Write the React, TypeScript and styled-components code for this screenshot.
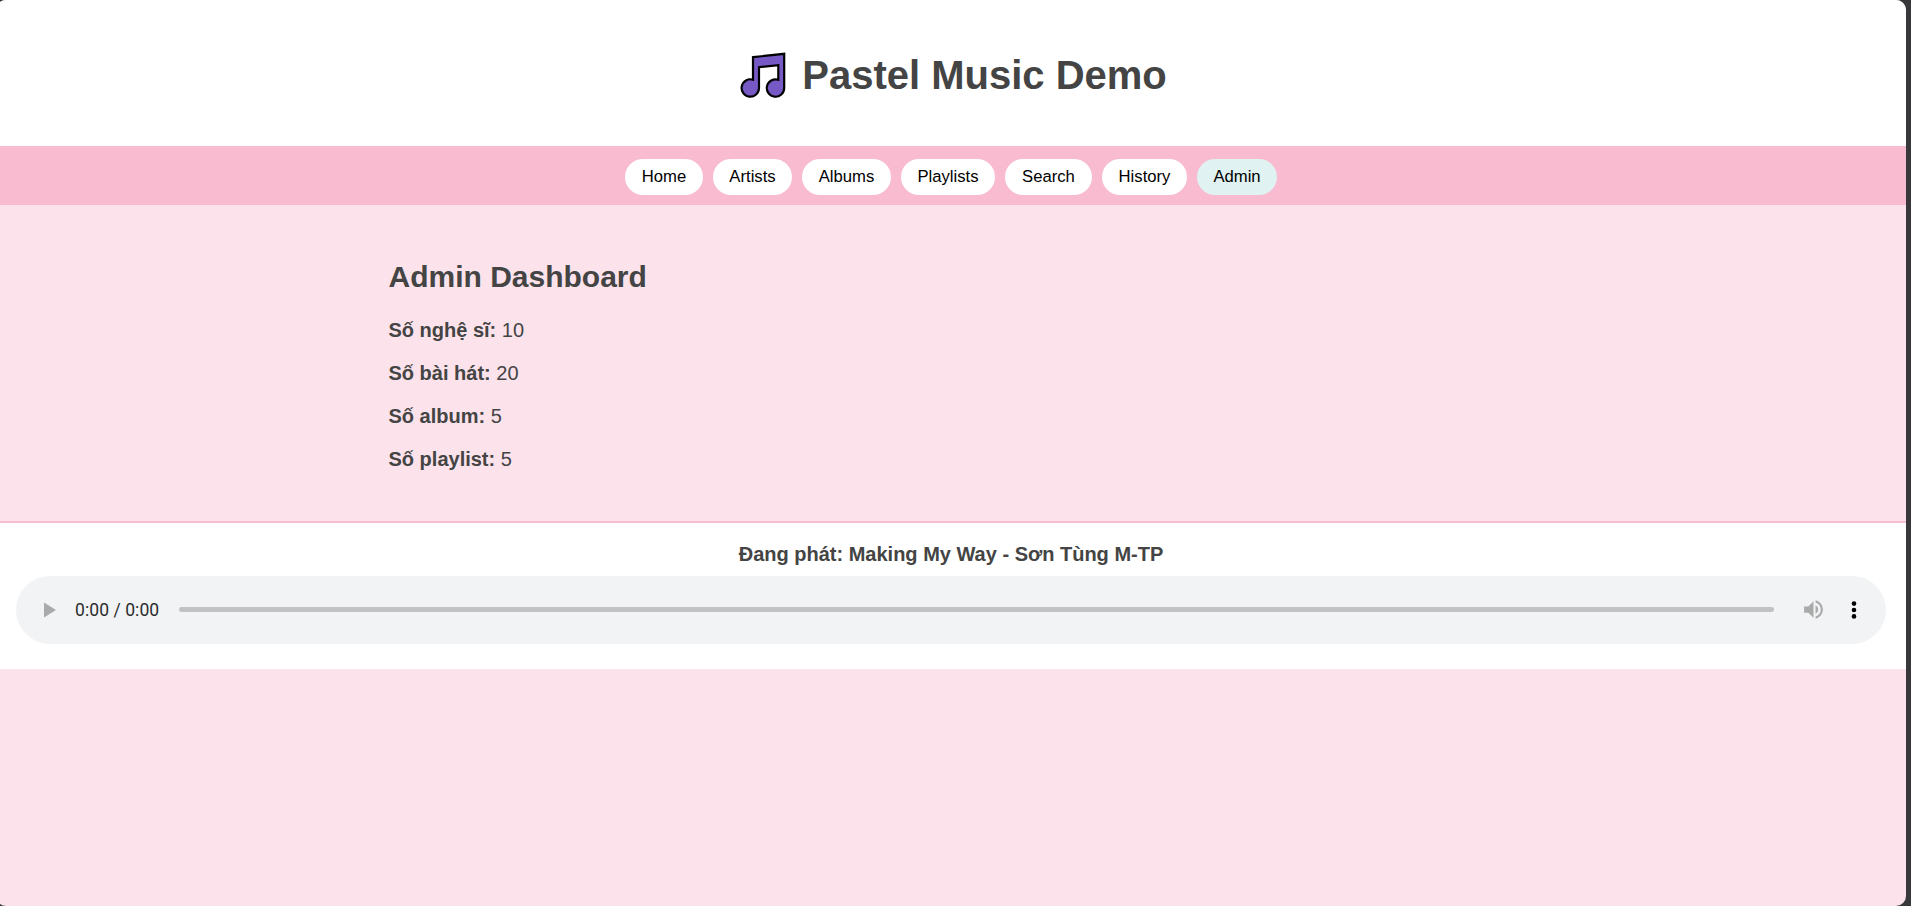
import React from "react";
import styled, { createGlobalStyle } from "styled-components";

const GlobalStyle = createGlobalStyle`
  * { box-sizing: border-box; }
  html, body { margin: 0; background: #38383a; overflow: hidden; }
  body { font-family: "Liberation Sans", Arial, sans-serif; color: #444; font-size: 20px; }
`;

const Page = styled.div`
  width: 1910px;
  height: 906px;
  margin-left: -4px;
  display: flex;
  flex-direction: column;
  background: #fce3eb;
  border-radius: 10px;
  overflow: hidden;
`;

const Header = styled.header`
  height: 146px;
  flex: none;
  display: flex;
  align-items: center;
  justify-content: center;
  gap: 16px;
  padding: 4px 0 0 5px;
  background: #fff;
`;

const NoteIcon = styled.svg`
  width: 46px;
  height: 46px;
`;

const Title = styled.h1`
  margin: 0;
  font-size: 40px;
  line-height: 46px;
  white-space: nowrap;
`;

const Nav = styled.nav`
  height: 59px;
  flex: none;
  display: flex;
  justify-content: center;
  align-items: flex-start;
  gap: 10px;
  padding-top: 13px;
  background: #f8bbd0;
`;

const NavButton = styled.button<{ $width: number; $active?: boolean }>`
  width: ${(p) => p.$width}px;
  height: 36px;
  padding: 0 0 1px;
  border: 0;
  border-radius: 18px;
  background: ${(p) => (p.$active ? "#e0f2f1" : "#fff")};
  color: #000;
  font: 16.667px "Liberation Sans", Arial, sans-serif;
  white-space: nowrap;
`;

const Main = styled.main`
  width: 1125px;
  height: 316px;
  flex: none;
  margin: 0 auto;
  padding-top: 54px;
`;

const Heading = styled.h2`
  margin: 0 0 25px;
  font-size: 30px;
  line-height: 35px;
`;

const Stat = styled.p`
  margin: 0 0 20px;
  line-height: 23px;
`;

const Player = styled.footer`
  height: 148px;
  flex: none;
  padding: 19px 20px 0;
  border-top: 2px solid #f8bbd0;
  background: #fff;
`;

const NowPlaying = styled.div`
  height: 34px;
  line-height: 24px;
  font-weight: bold;
  text-align: center;
`;

const AudioBar = styled.div`
  height: 68px;
  display: flex;
  align-items: center;
  padding: 0 29.5px 1px 28px;
  border-radius: 34px;
  background: #f1f3f4;
`;

const PlayIcon = styled.svg`
  width: 12px;
  height: 16px;
`;

const Time = styled.span`
  width: 104px;
  margin-left: 19px;
  font: 17.5px Roboto, sans-serif;
  letter-spacing: 0.08px;
  color: #2b2c2d;
  white-space: nowrap;
`;

const Track = styled.div`
  flex: 1;
  height: 5px;
  border-radius: 3px;
  background: #c0c2c3;
`;

const VolumeIcon = styled.svg`
  width: 25px;
  height: 25px;
  margin-left: 27px;
`;

const MoreIcon = styled.svg`
  width: 6px;
  height: 18px;
  margin-left: 24.5px;
`;

const links = [
  { label: "Home", width: 78 },
  { label: "Artists", width: 79 },
  { label: "Albums", width: 89 },
  { label: "Playlists", width: 94 },
  { label: "Search", width: 87 },
  { label: "History", width: 85 },
  { label: "Admin", width: 80 },
];

const stats = [
  { label: "Số nghệ sĩ:", value: 10 },
  { label: "Số bài hát:", value: 20 },
  { label: "Số album:", value: 5 },
  { label: "Số playlist:", value: 5 },
];

export default function App() {
  return (
    <>
      <GlobalStyle />
      <Page>
        <Header>
          <NoteIcon viewBox="0 0 46 46">
            <path
              d="M13 5.2 L44.2 1.8 V36 A8.7 8.7 0 1 1 38.3 27.8 V13.2 L19 15.2 V36 A8.7 8.7 0 1 1 13 27.7 Z"
              fill="#7659c4"
              stroke="#000"
              strokeWidth="2.2"
            />
          </NoteIcon>
          <Title>Pastel Music Demo</Title>
        </Header>
        <Nav>
          {links.map((l) => (
            <NavButton key={l.label} $width={l.width} $active={l.label === "Admin"}>
              {l.label}
            </NavButton>
          ))}
        </Nav>
        <Main>
          <Heading>Admin Dashboard</Heading>
          {stats.map((s) => (
            <Stat key={s.label}>
              <strong>{s.label}</strong> {s.value}
            </Stat>
          ))}
        </Main>
        <Player>
          <NowPlaying>Đang phát: Making My Way - Sơn Tùng M-TP</NowPlaying>
          <AudioBar>
            <PlayIcon viewBox="0 0 12 16">
              <path d="M0 .5 L12 8 L0 15.5Z" fill="#a9abab" />
            </PlayIcon>
            <Time>0:00 / 0:00</Time>
            <Track />
            <VolumeIcon viewBox="0 0 24 24">
              <path
                d="M3 9v6h4l5 5V4L7 9H3zm13.500 3c0-1.770-1.020-3.290-2.500-4.030v8.050c1.480-.73 2.500-2.250 2.500-4.020zM14 3.230v2.060c2.890.86 5 3.540 5 6.710s-2.110 5.850-5 6.710v2.060c4.010-.91 7-4.490 7-8.770s-2.990-7.860-7-8.770z"
                fill="#a9abab"
              />
            </VolumeIcon>
            <MoreIcon viewBox="0 0 6 18">
              <circle cx="3" cy="2.600" r="2.300" />
              <circle cx="3" cy="9" r="2.300" />
              <circle cx="3" cy="15.400" r="2.300" />
            </MoreIcon>
          </AudioBar>
        </Player>
      </Page>
    </>
  );
}
